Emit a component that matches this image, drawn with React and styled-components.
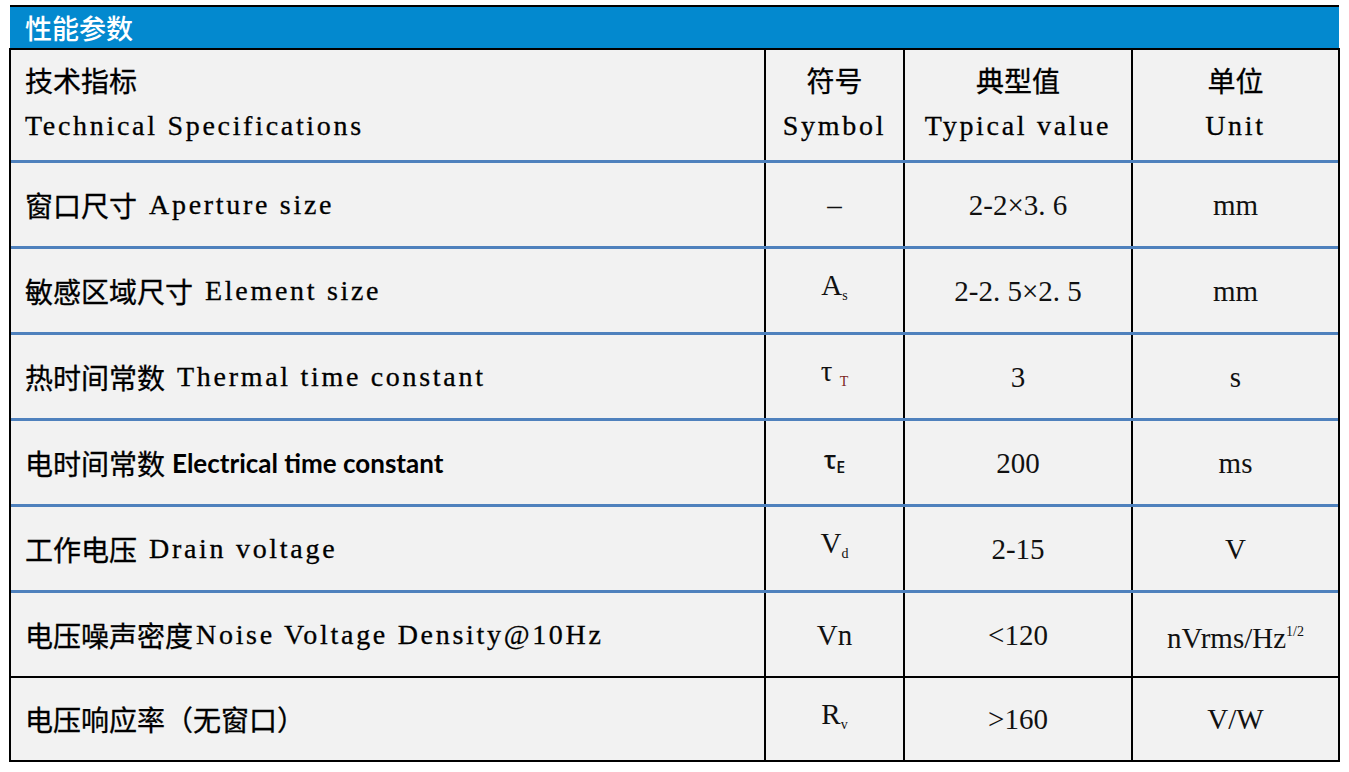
import React from "react";
import styled, { createGlobalStyle } from "styled-components";

const GlobalStyle = createGlobalStyle`
  html, body { margin: 0; padding: 0; background: #fff; }
  body { font-family: "Noto Sans CJK SC", sans-serif; color: #000; }
`;

const COLS = "755px 139px 228px 1fr";

const getRows = () => [
  { cn: "窗口尺寸", en: "Aperture size", gap: 12, sym: "–", value: "2-2×3. 6", unit: "mm" },
  { cn: "敏感区域尺寸", en: "Element size", gap: 12, sym: <>A<Sub>s</Sub></>, value: "2-2. 5×2. 5", unit: "mm" },
  { cn: "热时间常数", en: "Thermal time constant", gap: 12, sym: <>τ <Sub $red>T</Sub></>, value: "3", unit: "s" },
  { cn: "电时间常数", en: "Electrical time constant", gap: 7, sans: true, sym: <Tau>τ<TauSub>E</TauSub></Tau>, value: "200", unit: "ms" },
  { cn: "工作电压", en: "Drain voltage", gap: 12, sym: <>V<Sub>d</Sub></>, value: "2-15", unit: "V" },
  { cn: "电压噪声密度", en: "Noise Voltage Density@10Hz", gap: 3, sym: "Vn", value: "<120", unit: <>nVrms/Hz<Sup>1/2</Sup></>, line: "black" },
  { cn: "电压响应率（无窗口）", en: "", sym: <>R<Sub>v</Sub></>, value: ">160", unit: "V/W", line: "none" },
];

export default function App() {
  const rows = getRows();
  return (
    <Page>
      <GlobalStyle />
      <Panel>
        <TitleBar>性能参数</TitleBar>
        <Table>
          <Row $line="blue" $head>
            <Cell>
              <Stack>
                <Cn>技术指标</Cn>
                <En>Technical Specifications</En>
              </Stack>
            </Cell>
            <Cell $center>
              <Stack $center>
                <Cn>符号</Cn>
                <En>Symbol</En>
              </Stack>
            </Cell>
            <Cell $center>
              <Stack $center>
                <Cn>典型值</Cn>
                <En>Typical value</En>
              </Stack>
            </Cell>
            <Cell $center $last>
              <Stack $center>
                <Cn>单位</Cn>
                <En>Unit</En>
              </Stack>
            </Cell>
          </Row>
          {rows.map((r, i) => (
            <Row key={i} $line={r.line || "blue"}>
              <Cell>
                <Cn>{r.cn}</Cn>
                {r.en && (r.sans ? <EnSans $gap={r.gap}>{r.en}</EnSans> : <En $gap={r.gap}>{r.en}</En>)}
              </Cell>
              <Cell $center>
                <Val>{r.sym}</Val>
              </Cell>
              <Cell $center>
                <Val>{r.value}</Val>
              </Cell>
              <Cell $center $last>
                <Val>{r.unit}</Val>
              </Cell>
            </Row>
          ))}
        </Table>
      </Panel>
    </Page>
  );
}

const Page = styled.div`
  padding: 5px 0 0 9px;
`;

const Panel = styled.div`
  width: 1331px;
`;

const TitleBar = styled.div`
  border-top: 2px solid #000;
  height: 41px;
  margin: 0 1px;
  background: #0389cf;
  color: #fff;
  font-family: "Noto Sans CJK SC", sans-serif;
  font-size: 27px;
  font-weight: 500;
  line-height: 41px;
  padding-left: 15px;
`;

const Table = styled.div`
  border: 2px solid #000;
  background: #f2f2f2;
`;

const lineColor = { blue: "3px solid #4f81bd", black: "2px solid #000", none: "0" };

const Row = styled.div`
  display: grid;
  grid-template-columns: ${COLS};
  height: ${(p) => (p.$head ? "113px" : p.$line === "black" ? "85px" : p.$line === "none" ? "82px" : "86px")};
  border-bottom: ${(p) => lineColor[p.$line]};
  box-sizing: border-box;
`;

const Cell = styled.div`
  display: flex;
  align-items: center;
  justify-content: ${(p) => (p.$center ? "center" : "flex-start")};
  padding-left: ${(p) => (p.$center ? "0" : "14px")};
  border-right: ${(p) => (p.$last ? "0" : "2px solid #000")};
  white-space: nowrap;
`;

const Stack = styled.div`
  display: flex;
  flex-direction: column;
  align-items: ${(p) => (p.$center ? "center" : "flex-start")};
  gap: 8px;
  margin-top: -5px;
`;

const Cn = styled.span`
  font-family: "Noto Sans CJK SC", sans-serif;
  font-size: 28px;
  font-weight: 400;
  line-height: 38px;
  -webkit-text-stroke: 0.3px #000;
`;

const En = styled.span`
  font-family: "Liberation Serif", serif;
  font-size: 28px;
  letter-spacing: 2.7px;
  line-height: 38px;
  -webkit-text-stroke: 0.3px #000;
  margin-left: ${(p) => p.$gap || 0}px;
`;

const EnSans = styled.span`
  font-family: Lato, "Open Sans", sans-serif;
  font-weight: 700;
  font-size: 26px;
  line-height: 38px;
  margin-left: ${(p) => p.$gap || 0}px;
`;

const Val = styled.span`
  font-family: "Liberation Serif", serif;
  font-size: 29px;
  line-height: 38px;
  color: #111;
`;

const Sub = styled.span`
  font-size: 14px;
  vertical-align: -5px;
  color: ${(p) => (p.$red ? "#7a2418" : "inherit")};
`;

const Sup = styled.span`
  font-size: 14px;
  vertical-align: 12px;
`;

const Tau = styled.span`
  font-family: "Open Sans", sans-serif;
  font-weight: 600;
  font-size: 25px;
`;

const TauSub = styled.span`
  font-size: 16px;
  vertical-align: -4px;
`;
